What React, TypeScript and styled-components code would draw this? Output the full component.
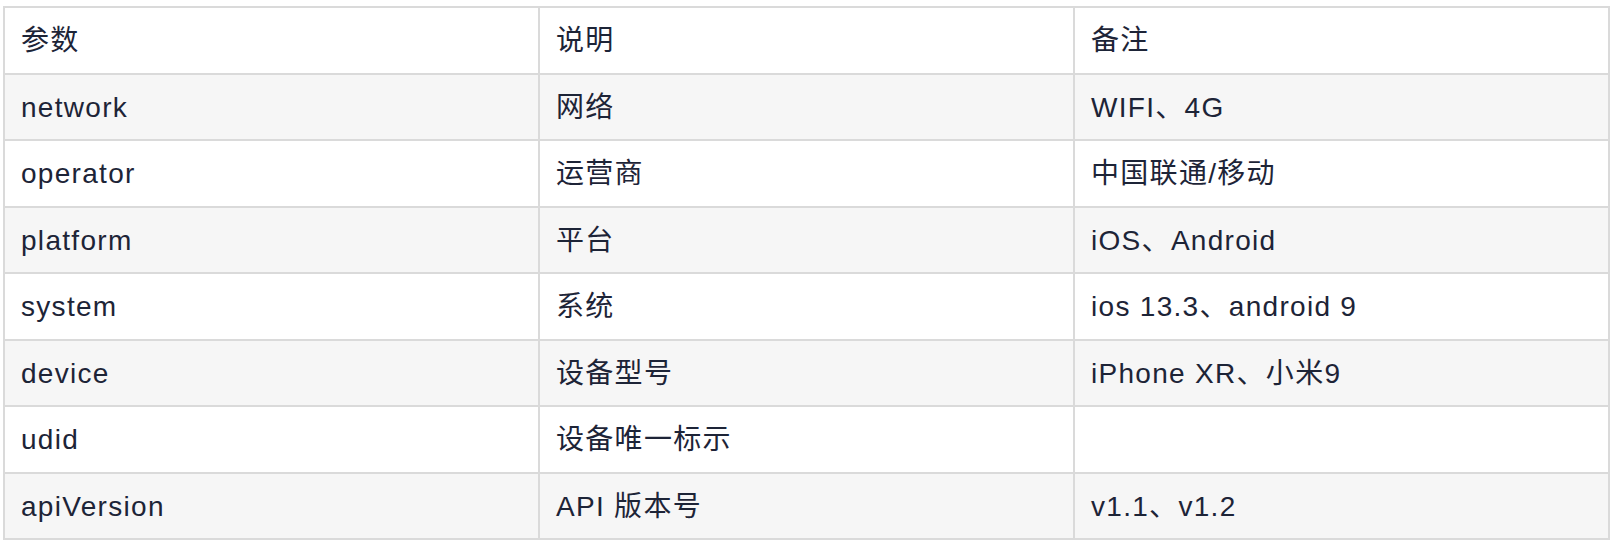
import styled, { createGlobalStyle } from 'styled-components';

const GlobalStyle = createGlobalStyle`
  html, body {
    margin: 0;
    padding: 0;
    background: #ffffff;
  }
  body {
    font-family: "Liberation Sans", "Noto Sans CJK SC", sans-serif;
  }
`;

const Page = styled.div`
  width: 1614px;
  height: 544px;
  padding: 6px 4px 0 3px;
  box-sizing: border-box;
`;

const Table = styled.table`
  width: 1607px;
  border-collapse: collapse;
  table-layout: fixed;
  font-size: 28px;
  line-height: 34px;
  letter-spacing: 1.3px;
  color: #1d2437;
`;

const Row = styled.tr<{ $striped?: boolean }>`
  background: ${(p) => (p.$striped ? '#f6f6f6' : '#ffffff')};
`;

const Cell = styled.td`
  height: 62.5px;
  padding: 2px 16px 0;
  border: 2px solid #dadada;
  vertical-align: middle;
  text-align: left;
  font-weight: 400;
  white-space: nowrap;
`;

const HeadCell = styled(Cell).attrs({ as: 'th' })``;

const rows = [
  ['network', '网络', 'WIFI、4G'],
  ['operator', '运营商', '中国联通/移动'],
  ['platform', '平台', 'iOS、Android'],
  ['system', '系统', 'ios 13.3、android 9'],
  ['device', '设备型号', 'iPhone XR、小米9'],
  ['udid', '设备唯一标示', ''],
  ['apiVersion', 'API 版本号', 'v1.1、v1.2'],
];

export default function App() {
  return (
    <Page>
      <GlobalStyle />
      <Table>
        <thead>
          <Row>
            <HeadCell>参数</HeadCell>
            <HeadCell>说明</HeadCell>
            <HeadCell>备注</HeadCell>
          </Row>
        </thead>
        <tbody>
          {rows.map((r, i) => (
            <Row key={r[0]} $striped={i % 2 === 0}>
              {r.map((c, j) => (
                <Cell key={j}>{c}</Cell>
              ))}
            </Row>
          ))}
        </tbody>
      </Table>
    </Page>
  );
}
